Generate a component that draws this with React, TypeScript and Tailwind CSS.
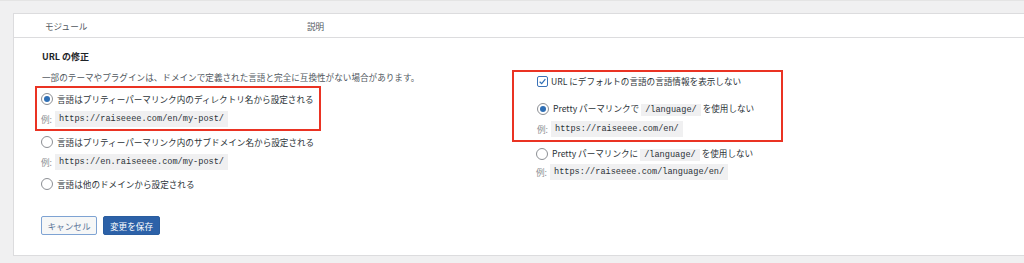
const jp = "font-['Noto_Sans_CJK_JP','Noto_Sans',sans-serif]";

function Radio({ checked }: { checked?: boolean }) {
  return (
    <span className="flex h-[12px] w-[12px] shrink-0 items-center justify-center rounded-full border border-[#8c8f94] bg-white">
      {checked && <span className="h-[6px] w-[6px] rounded-full bg-[#2f6fb5]" />}
    </span>
  )
}

function Code({ children }: { children: React.ReactNode }) {
  return (
    <code className="bg-[#f0f0f1] px-[4px] py-[1px] font-['Liberation_Mono',monospace] text-[8.6px] leading-[14px] text-[#2c3338]">
      {children}
    </code>
  )
}

function Example({ url }: { url: string }) {
  return (
    <div className="flex h-[16px] items-center gap-[3px]">
      <span className="text-[#8c8f94]">例:</span>
      <Code>{url}</Code>
    </div>
  )
}

function Option({ checked, children }: { checked?: boolean; children: React.ReactNode }) {
  return (
    <div className="flex h-[16px] items-center gap-[4px]">
      <Radio checked={checked} />
      <span className="text-[#2c3338]">{children}</span>
    </div>
  )
}

export default function App() {
  return (
    <div className={`h-[263px] w-[1024px] overflow-hidden border-t border-[#e4e4e4] bg-[#f0f0f1] text-[8.6px] leading-[12px] ${jp}`}>
      <div className="ml-[13px] mt-[12px] border-b border-l border-t border-[#dcdcde] bg-white">
        {/* table header */}
        <div className="flex h-[24px] items-center border-b border-[#dcdcde] pl-[31px] text-[#50575e]">
          <span className="w-[262px]">モジュール</span>
          <span>説明</span>
        </div>

        <div className="grid grid-cols-[522px_1fr] pb-[20px]">
          {/* left column */}
          <div className="flex flex-col pl-[27px]">
            <h2 className="mt-[13px] pl-[1px] text-[9px] font-bold leading-[12px] text-[#1d2327]">URL の修正</h2>
            <p className="mt-[8px] pl-[1px] text-[#50575e]">
              一部のテーマやプラグインは、ドメインで定義された言語と完全に互換性がない場合があります。
            </p>

            <div className="-ml-[6px] mt-[3px] w-[286px] border-2 border-[#ea3323] pb-[2px] pl-[4px] pt-[3px]">
              <Option checked>言語はプリティーパーマリンク内のディレクトリ名から設定される</Option>
              <div className="mt-[4px]">
                <Example url="https://raiseeee.com/en/my-post/" />
              </div>
            </div>

            <div className="mt-[3px]">
              <Option>言語はプリティーパーマリンク内のサブドメイン名から設定される</Option>
            </div>
            <div className="mt-[4px]">
              <Example url="https://en.raiseeee.com/my-post/" />
            </div>
            <div className="mt-[6px]">
              <Option>言語は他のドメインから設定される</Option>
            </div>

            <div className="mt-[24px] flex gap-[6px]">
              <button className="h-[19px] w-[56px] rounded-[2px] border border-[#7ea3d3] bg-[#f6f7f7] text-[8.6px] text-[#5b7599]">
                キャンセル
              </button>
              <button className="h-[19px] w-[57px] rounded-[2px] border border-[#2a5d9f] bg-[#2c61a8] text-[8.6px] text-white">
                変更を保存
              </button>
            </div>
          </div>

          {/* right column */}
          <div className="flex flex-col">
            <div className="-ml-[24px] mt-[32px] w-[271px] border-2 border-[#ea3323] pb-[3px] pl-[23px] pt-[1px]">
              <div className="flex h-[16px] items-center gap-[3px]">
                <span className="flex h-[11px] w-[11px] shrink-0 items-center justify-center rounded-[2px] border border-[#3a72b8] bg-white">
                  <svg viewBox="0 0 12 12" className="h-[9px] w-[9px]">
                    <path d="M2.2 6.3 L4.9 8.9 L9.8 2.8" fill="none" stroke="#2f6fb5" strokeWidth="1.6" />
                  </svg>
                </span>
                <span className="text-[#2c3338]">URL にデフォルトの言語の言語情報を表示しない</span>
              </div>
              <div className="mt-[12px]">
                <Option checked>
                  Pretty パーマリンクで <Code>/language/</Code> を使用しない
                </Option>
              </div>
              <div className="mt-[4px]">
                <Example url="https://raiseeee.com/en/" />
              </div>
            </div>

            <div className="mt-[4px]">
              <Option>
                Pretty パーマリンクに <Code>/language/</Code> を使用しない
              </Option>
            </div>
            <div className="mt-[2px]">
              <Example url="https://raiseeee.com/language/en/" />
            </div>
          </div>
        </div>
      </div>
    </div>
  )
}
